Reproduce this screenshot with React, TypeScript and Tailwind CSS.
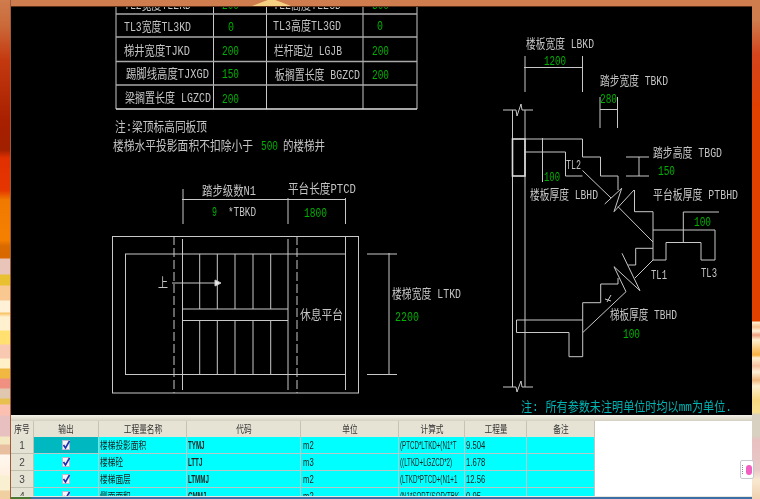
import React from 'react';

const CAD_FONT = '"Liberation Mono", "Noto Sans CJK SC", monospace';
const GRID_FONT = '"Liberation Sans", "Noto Sans CJK SC", sans-serif';

// x, centre y, width, text
type Label = [number, number, number, string];

const whiteLabels: Label[] = [
  [125, 5, 67, 'TL2宽度TL2KD'],
  [274, 5, 68, 'TL2高度TL2GD'],
  [125, 27, 67, 'TL3宽度TL3KD'],
  [274, 26, 68, 'TL3高度TL3GD'],
  [125, 51, 66, '梯井宽度TJKD'],
  [275, 51, 68, '栏杆距边 LGJB'],
  [127, 74, 83, '踢脚线高度TJXGD'],
  [276, 75, 85, '板搁置长度 BGZCD'],
  [126, 98, 86, '梁搁置长度 LGZCD'],
  [116, 127, 92, '注:梁顶标高同板顶'],
  [114, 146, 140, '楼梯水平投影面积不扣除小于'],
  [284, 146, 42, '的楼梯井'],
  [203, 191, 54, '踏步级数N1'],
  [289, 189, 68, '平台长度PTCD'],
  [229, 212, 28, '*TBKD'],
  [159, 283, 10, '上'],
  [301, 315, 43, '休息平台'],
  [393, 294, 69, '楼梯宽度 LTKD'],
  [527, 44, 68, '楼板宽度 LBKD'],
  [601, 81, 68, '踏步宽度 TBKD'],
  [654, 153, 69, '踏步高度 TBGD'],
  [567, 165, 15, 'TL2'],
  [531, 195, 68, '楼板厚度 LBHD'],
  [654, 195, 85, '平台板厚度 PTBHD'],
  [652, 275, 16, 'TL1'],
  [702, 273, 16, 'TL3'],
  [611, 315, 67, '梯板厚度 TBHD'],
];

const greenLabels: Label[] = [
  [223, 5, 17, '200'],
  [373, 5, 17, '300'],
  [229, 27, 6, '0'],
  [378, 26, 6, '0'],
  [223, 51, 17, '200'],
  [373, 51, 17, '200'],
  [223, 74, 17, '150'],
  [373, 75, 17, '200'],
  [223, 99, 17, '200'],
  [262, 146, 17, '500'],
  [213, 212, 5, '9'],
  [305, 213, 23, '1800'],
  [396, 317, 24, '2200'],
  [545, 61, 22, '1200'],
  [601, 99, 17, '280'],
  [545, 177, 16, '100'],
  [659, 171, 17, '150'],
  [695, 222, 17, '100'],
  [624, 334, 17, '100'],
];

const rows = [
  ['1', '楼梯投影面积', 'TYMJ', 'm2', '(PTCD*LTKD+(N1*T', '9.504'],
  ['2', '楼梯砼', 'LTTJ', 'm3', '((LTKD+LGZCD*2)', '1.678'],
  ['3', '楼梯面层', 'LTMMJ', 'm2', '(LTKD*PTCD+(N1+1', '12.56'],
  ['4', '侧面面积', 'CMMJ', 'm2', '(N1*SQRT(SQR(TBK', '0.95'],
];

const gridCols = 'grid grid-cols-[23px_65px_88px_114px_98px_66px_62px_68px]';
const cyanCell = 'flex items-center overflow-hidden bg-[#00ffff] border-r border-b border-[#b8c8c8]';

function CadText({ label, fill }: { label: Label; fill: string }) {
  const [x, y, w, text] = label;
  return (
    <text x={x} y={y} textLength={w} lengthAdjust="spacingAndGlyphs" dominantBaseline="central" fontSize={13} fill={fill}>
      {text}
    </text>
  );
}

function Drawing() {
  const dashed = '9 3';
  return (
    <div className="bg-black">
      <svg viewBox="12 7 740 408" className="block w-[740px] h-[408px] blur-[0.4px]" style={{ fontFamily: CAD_FONT }}>
        <g fill="none" stroke="#c8c8c8" strokeWidth="1">
          {/* parameter table */}
          <path d="M117 0V109M214.5 0V109M267.5 0V109M364 0V109M418 0V109" />
          <path d="M117 14H418M117 37H418M117 61.5H418M117 85H418" strokeWidth="1.3" stroke="#a8a8a8" />
          <path d="M117 109H418" strokeWidth="1.6" stroke="#e0e0e0" />

          {/* plan view */}
          <path d="M183 199.5H346.5M184 189V224M289 198V224M346.5 198V224" />
          <rect x="113.5" y="236.5" width="246" height="156.5" />
          <rect x="126.5" y="254" width="220" height="120.5" />
          <path d="M175 236V393M298 236V393" strokeDasharray={dashed} />
          <path d="M183.5 239V390M289 239V390M346.5 236V254M346.5 374V390" />
          <path d="M200.7 254V309M218.3 254V309M236 254V309M254 254V309M271.7 254V309" />
          <path d="M183.5 309H289M183.5 320.5H289" />
          <path d="M200.7 320.5V374.5M218.3 320.5V374.5M236 320.5V374.5M254 320.5V374.5M271.7 320.5V374.5" />
          <path d="M173 283H217" />
          <path d="M216 280L222 283L216 286Z" fill="#e8e8e8" />
          <path d="M390 253V375M368 254H398M368 374.5H398" />

          {/* section view */}
          <path d="M526 56V92M583.5 56V92M525 67.5H583.5" />
          <path d="M601 97V128M618.5 97V128M601 109.5H618.5" />
          <path d="M504 110H517L518 116L522 104L523 110H534" />
          <path d="M504 387H517L518 392L522 381L523 387H534" />
          <path d="M513.5 110V387M526 110V387" />
          <rect x="513.5" y="139" width="12.5" height="37" strokeWidth="1.6" stroke="#dcdcdc" />
          <path d="M526 139H583.5V157H601.5V176H619V190M526 152H566.5V176H583.5" />
          <path d="M543.5 138V182" />
          <path d="M627 157H650M627 176H650M640 157V176" />
          <path d="M583.5 170.5L612 198M619 206.7L654 242" />
          <path d="M605.7 204L622.7 188.3L615 211.7L635 190" />
          <path d="M635.5 190V211.7H654V260H667V242.5H702V260H716V230H654" />
          <path d="M684.3 212V242M684.3 212H720" />
          <path d="M654 260L636 278" />
          <path d="M654 248.3H636.7V265H629.3" />
          <path d="M623 253.3L641 290.7M615 266.7L641 290.7M615 266.7L627 291.7" />
          <path d="M627 291.7L584 332.3" />
          <path d="M619 278V284H601.7V302.7H583.7V320H517.5V332.5H570V356.7H583.7V320" />
          <path d="M606 299L612 301M608 302L612 295" />
        </g>
        <g>
          {whiteLabels.map((label) => (
            <CadText key={label[3] + label[0]} label={label} fill="#c4c4c4" />
          ))}
          {greenLabels.map((label) => (
            <CadText key={label[3] + label[0] + label[1]} label={label} fill="#00b000" />
          ))}
          <CadText label={[522, 407, 211, '注: 所有参数未注明单位时均以mm为单位.']} fill="#00b4b4" />
        </g>
      </svg>
    </div>
  );
}

function Checkbox() {
  return (
    <svg viewBox="0 0 8 10" className="w-[8px] h-[10px]">
      <rect x="0.5" y="0.5" width="7" height="9" fill="#f4f4f8" stroke="#b8bcd0" />
      <path d="M1.5 5L3.5 8L7.5 1" fill="none" stroke="#1a2fb0" strokeWidth="1.6" />
    </svg>
  );
}

// the grid's font is tall and narrow, so squeeze a 10px face sideways
function Squeezed({ children, center, narrow }: { children: React.ReactNode; center?: boolean; narrow?: boolean }) {
  return (
    <span
      className={`inline-block whitespace-nowrap ${narrow ? 'scale-x-[0.62]' : 'scale-x-[0.77]'} ${center ? 'origin-center' : 'origin-left'}`}
    >
      {children}
    </span>
  );
}

function Grid() {
  const head = ['序号', '输出', '工程量名称', '代码', '单位', '计算式', '工程量', '备注'];
  return (
    <div className="h-[75px] overflow-hidden bg-white flex blur-[0.3px]" style={{ fontFamily: GRID_FONT }}>
      <div className="w-[584px] shrink-0 text-[10px] text-[#222]">
        <div className={`${gridCols} h-[16px] bg-[#e6e3d4]`}>
          {head.map((h) => (
            <div key={h} className="flex items-center justify-center border-r border-[#c6c3b4] text-[#333]">
              <Squeezed center>{h}</Squeezed>
            </div>
          ))}
        </div>
        {rows.map((row, i) => (
          <div key={row[0]} className={`${gridCols} h-[17px]`}>
            <div className="flex items-center justify-center bg-[#e3e2d3] border-r border-b border-[#c0c0b0] text-[#444]">
              {row[0]}
            </div>
            <div className={`flex items-center justify-center border-r border-b border-[#b8c8c8] ${i === 0 ? 'bg-[#00b8c0]' : 'bg-[#00ffff]'}`}>
              <Checkbox />
            </div>
            <div className={`${cyanCell} pl-[1px]`}>
              <Squeezed>{row[1]}</Squeezed>
            </div>
            <div className={`${cyanCell} pl-[1px] font-bold`}>
              <Squeezed narrow>{row[2]}</Squeezed>
            </div>
            <div className={`${cyanCell} pl-[2px]`}>
              <Squeezed>{row[3]}</Squeezed>
            </div>
            <div className={`${cyanCell} pl-[1px]`}>
              <Squeezed narrow>{row[4]}</Squeezed>
            </div>
            <div className={`${cyanCell} pl-[1px]`}>
              <Squeezed>{row[5]}</Squeezed>
            </div>
            <div className={cyanCell} />
          </div>
        ))}
      </div>
      <div className="flex-1 bg-white" />
    </div>
  );
}

export default function App() {
  return (
    <div className="relative flex w-[760px] h-[499px] overflow-hidden bg-[#cf7c4e]">
      {/* wallpaper, left */}
      <div className="w-[11px] shrink-0 border-r border-[#a05a3a] bg-[linear-gradient(180deg,#cf7c4e_0,#cb6a3a_25px,#c4390f_60px,#a82000_120px,#a02000_150px,#e03000_158px,#e53500_190px,#f07a00_200px,#f58000_240px,#d96a00_246px,#d86800_258px,#e9c4b8_259px,#e9c4b8_274px,#e8c030_275px,#e8c030_285px,#f8c890_286px,#f8c890_300px,#fff0d8_301px,#fff0d8_312px,#f8c060_313px,#fff0d0_317px,#fff0d0_330px,#ffe070_331px,#ffe070_344px,#f8c8b0_345px,#f8c8b0_358px,#fff0c8_359px,#fff0c8_368px,#f0b840_369px,#f0b840_378px,#f09080_379px,#f09080_388px,#e0c8b0_389px,#e0c8b0_398px,#e8c050_399px,#e8c050_404px,#fcc0b0_405px,#fcc0b0_415px,#e8c0c0_416px,#e8c0c0_436px,#f4e8c0_437px,#f4e8c0_444px,#e8c0a0_445px,#e8c0a0_454px,#fff8f0_455px,#fff0e0_475px,#f8f0d0_476px,#f8f0d0_490px,#f0d0a0_491px)]" />

      <div className="w-[741px] shrink-0 flex flex-col">
        {/* wallpaper, top */}
        <div className="h-[6px] bg-[#cf7c4e]">
          <div className="ml-[241px] w-[39px] h-[6px] bg-[#f5d080] [clip-path:polygon(40%_0,60%_0,100%_100%,0_100%)]" />
        </div>
        <div className="h-px bg-[#5a3018]" />
        <Drawing />
        <div className="h-[6px] bg-[linear-gradient(180deg,#f4f2e8,#d4d0c0)]" />
        <Grid />
        <div className="h-px bg-[#e8e8e0]" />
        <div className="flex-1 flex">
          <div className="w-[20px] bg-[#4a7a30]" />
          <div className="flex-1 bg-[#3a6ea5]" />
        </div>
      </div>

      {/* wallpaper, right */}
      <div className="flex-1 bg-[linear-gradient(180deg,#cf7c4e_0,#cf7c4e_20px,#d4441c_55px,#e04000_110px,#e04000_321px,#fff0d0_322px,#f8c090_327px,#fff0d8_331px,#f0a080_335px,#fff0d0_340px,#f8b040_355px,#fff0d0_358px,#f8c0a0_366px,#fff0d8_372px,#f0b880_380px,#fff0d0_386px,#f8d880_400px,#f8e090_412px,#d8d0c0_415px,#d8d0c0_436px,#e8c0c0_440px,#e8c8c8_470px,#f8e8d0_480px,#f0d0b0_499px)]" />

      {/* floating side widget */}
      <div className="absolute left-[740px] top-[460px] flex items-center gap-[2px] w-[14px] h-[19px] rounded-[2px] border border-[#c8c8d0] bg-white pl-[1px]">
        <div className="w-[2px] h-[9px] border-l border-dotted border-[#888]" />
        <div className="w-[6px] h-[10px] rounded-full bg-[#f060c0]" />
      </div>
    </div>
  );
}
